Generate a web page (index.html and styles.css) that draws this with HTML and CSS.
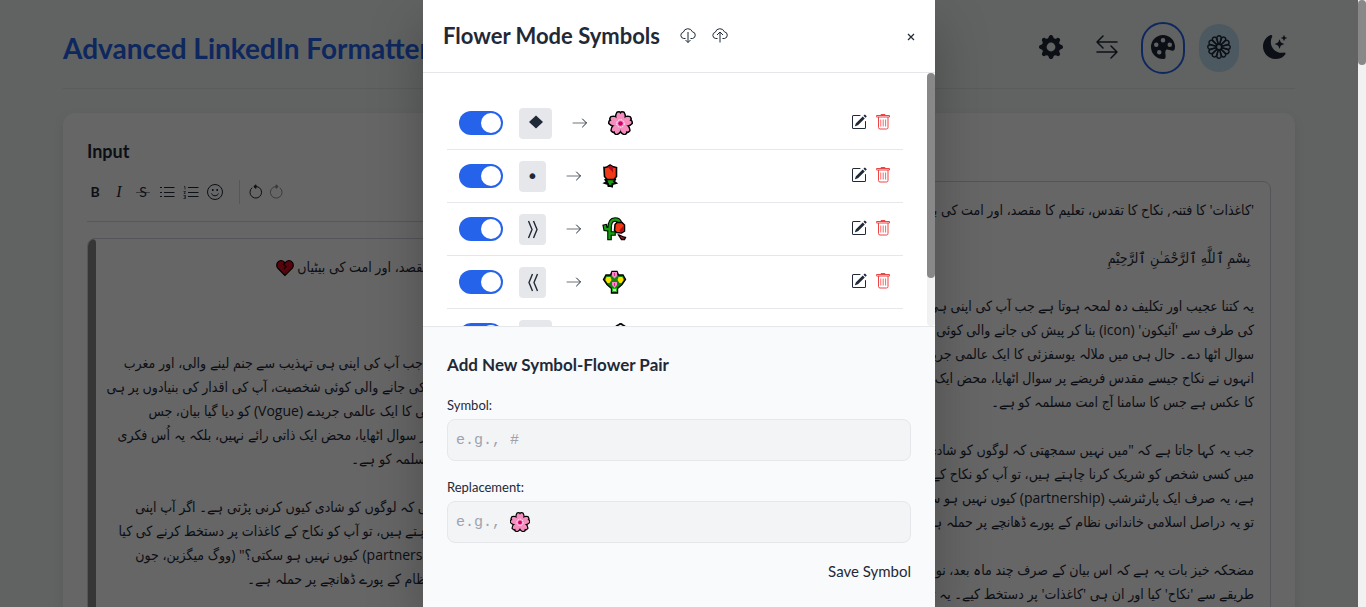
FILE: index.html
```html
<!DOCTYPE html>
<html lang="en">
<head>
<meta charset="utf-8">
<title>Advanced LinkedIn Formatter</title>
<link rel="stylesheet" href="styles.css">
</head>
<body>
<svg class="sprite" aria-hidden="true">
  <symbol id="edit" viewBox="0 0 16 16"><path d="M15.502 1.94a.5.5 0 0 1 0 .706L14.459 3.69l-2-2L13.502.646a.5.5 0 0 1 .707 0l1.293 1.293zm-1.75 2.456-2-2L4.939 9.21a.5.5 0 0 0-.121.196l-.805 2.414a.25.25 0 0 0 .316.316l2.414-.805a.5.5 0 0 0 .196-.12l6.813-6.814z"/><path d="M1 13.5A1.5 1.5 0 0 0 2.5 15h11a1.5 1.5 0 0 0 1.5-1.5v-6a.5.5 0 0 0-1 0v6a.5.5 0 0 1-.5.5h-11a.5.5 0 0 1-.5-.5v-11a.5.5 0 0 1 .5-.5H9a.5.5 0 0 0 0-1H2.5A1.5 1.5 0 0 0 1 2.5v11z"/></symbol>
  <symbol id="trash" viewBox="0 0 16 16"><g fill="none" stroke="currentColor"><path d="M1.5 2.5v-1h13v1.500h-13zM6 1.500V.5h4v1M3.500 3v10.500a1.500 1.500 0 0 0 1.500 1.500h6.500a1.500 1.500 0 0 0 1.500-1.500V3"/><path d="M5.800 5.500v7M8.200 5.500v7M10.600 5.500v7" stroke-opacity=".8"/></g></symbol>
  <symbol id="arrow" viewBox="0 0 16 16"><g fill="none" stroke="currentColor" stroke-linecap="round" stroke-linejoin="round"><path d="M1 8h13.500" stroke-opacity=".65"/><path d="m10.500 4 4 4-4 4"/></g></symbol>
  <symbol id="blossom" viewBox="0 0 24 24">
    <g fill="#f68dbf" stroke="#000" stroke-width="3" stroke-linejoin="round">
      <path id="petal" d="M12 12C7.500 8.500 7 5 9 1.800L10.800 1.600 12 3 13.200 1.600 15 1.800C17 5 16.500 8.500 12 12z"/>
      <use href="#petal" transform="rotate(72 12 12.500)"/><use href="#petal" transform="rotate(144 12 12.500)"/><use href="#petal" transform="rotate(216 12 12.500)"/><use href="#petal" transform="rotate(288 12 12.500)"/>
    </g>
    <g fill="#f68dbf" stroke="none">
      <path id="petal-fill" d="M12 12.500C7.500 8.500 7 5 9 1.800L10.800 1.600 12 3 13.200 1.600 15 1.800C17 5 16.500 8.500 12 12.500z"/><use href="#petal-fill" transform="rotate(72 12 12.500)"/><use href="#petal-fill" transform="rotate(144 12 12.500)"/><use href="#petal-fill" transform="rotate(216 12 12.500)"/><use href="#petal-fill" transform="rotate(288 12 12.500)"/>
    </g>
    <circle cx="12" cy="12.500" r="3.800" fill="#f68dbf" stroke="#fff" stroke-dasharray="1.500 1"/><circle cx="12" cy="12.500" r="2.300" fill="#d6006c"/>
  </symbol>
</svg>

<div class="app">
  <div class="page">
    <header class="top">
      <h1>Advanced LinkedIn Formatter</h1>
      <nav class="tools">
        <button aria-label="Settings"><svg viewBox="0 0 16 16"><path d="M9.405 1.05c-.413-1.4-2.397-1.4-2.81 0l-.1.34a1.464 1.464 0 0 1-2.105.872l-.31-.17c-1.283-.698-2.686.705-1.987 1.987l.169.311c.446.82.023 1.841-.872 2.105l-.34.1c-1.4.413-1.4 2.397 0 2.81l.34.1a1.464 1.464 0 0 1 .872 2.105l-.17.31c-.698 1.283.705 2.686 1.987 1.987l.311-.169a1.464 1.464 0 0 1 2.105.872l.1.34c.413 1.4 2.397 1.4 2.81 0l.1-.34a1.464 1.464 0 0 1 2.105-.872l.31.17c1.283.698 2.686-.705 1.987-1.987l-.169-.311a1.464 1.464 0 0 1 .872-2.105l.34-.1c1.4-.413 1.4-2.397 0-2.81l-.34-.1a1.464 1.464 0 0 1-.872-2.105l.17-.31c.698-1.283-.705-2.686-1.987-1.987l-.311.169a1.464 1.464 0 0 1-2.105-.872zM8 10.930a2.929 2.929 0 1 1 0-5.860 2.929 2.929 0 0 1 0 5.858z"/></svg></button>
        <button aria-label="Swap direction"><svg viewBox="0 0 24 24" fill="none" stroke="currentColor" stroke-width="1.500" stroke-linecap="round" stroke-linejoin="round"><path d="M22 7H2M8 1 2 7l6 6M2 17h20M16 11l6 6-6 6"/></svg></button>
        <button class="focused" aria-label="Theme"><svg viewBox="0 0 16 16"><path d="M12.433 10.07C14.133 10.585 16 11.15 16 8a8 8 0 1 0-8 8c1.996 0 1.826-1.504 1.649-3.08-.124-1.101-.252-2.237.351-2.920.465-.527 1.420-.237 2.433.070M8 5a1.500 1.500 0 1 1 0-3 1.500 1.500 0 0 1 0 3m4.500 3a1.500 1.500 0 1 1 0-3 1.500 1.500 0 0 1 0 3M5 6.500a1.500 1.500 0 1 1-3 0 1.500 1.500 0 0 1 3 0m.5 6.500a1.500 1.500 0 1 1 0-3 1.500 1.500 0 0 1 0 3"/></svg></button>
        <button class="active" aria-label="Flower mode"><svg viewBox="0 0 24 24" fill="none" stroke="currentColor" stroke-width="1.400"><circle cx="12" cy="12" r="2.600"/><path id="ray" d="M11.300 9.400 9.800 3a2.200 2.200 0 1 1 4.400 0l-1.500 6.400"/><use href="#ray" transform="rotate(30 12 12)"/><use href="#ray" transform="rotate(60 12 12)"/><use href="#ray" transform="rotate(90 12 12)"/><use href="#ray" transform="rotate(120 12 12)"/><use href="#ray" transform="rotate(150 12 12)"/><use href="#ray" transform="rotate(180 12 12)"/><use href="#ray" transform="rotate(210 12 12)"/><use href="#ray" transform="rotate(240 12 12)"/><use href="#ray" transform="rotate(270 12 12)"/><use href="#ray" transform="rotate(300 12 12)"/><use href="#ray" transform="rotate(330 12 12)"/></svg></button>
        <button aria-label="Dark mode"><svg viewBox="0 0 16 16"><path d="M6 .278a.77.77 0 0 1 .08.858 7.2 7.2 0 0 0-.878 3.46c0 4.021 3.278 7.277 7.318 7.277q.792-.001 1.533-.16a.79.79 0 0 1 .81.316.73.73 0 0 1-.031.893A8.35 8.35 0 0 1 8.344 16C3.734 16 0 12.286 0 7.71 0 4.266 2.114 1.312 5.124.06A.75.75 0 0 1 6 .278"/><path d="M10.794 3.148a.217.217 0 0 1 .412 0l.387 1.162c.173.518.579.924 1.097 1.097l1.162.387a.217.217 0 0 1 0 .412l-1.162.387a1.73 1.73 0 0 0-1.097 1.097l-.387 1.162a.217.217 0 0 1-.412 0l-.387-1.162A1.73 1.73 0 0 0 9.31 6.593l-1.162-.387a.217.217 0 0 1 0-.412l1.162-.387a1.73 1.73 0 0 0 1.097-1.097zM13.863.099a.145.145 0 0 1 .274 0l.258.774c.115.346.386.617.732.732l.774.258a.145.145 0 0 1 0 .274l-.774.258a1.16 1.16 0 0 0-.732.732l-.258.774a.145.145 0 0 1-.274 0l-.258-.774a1.16 1.16 0 0 0-.732-.732l-.774-.258a.145.145 0 0 1 0-.274l.774-.258c.346-.115.617-.386.732-.732z"/></svg></button>
      </nav>
    </header>

    <main class="card">
      <section class="pane">
        <h2>Input</h2>
        <div class="toolbar">
          <button class="bold" aria-label="Bold"><b>B</b></button>
          <button class="italic" aria-label="Italic"><i>I</i></button>
          <button aria-label="Strikethrough"><s>S</s></button>
          <button aria-label="Bulleted list"><svg viewBox="0 0 16 16" stroke="currentColor"><path d="M5 3.500h10.500M5 8.500h10.500M5 12.500h10.500M1 3.500h2M1 8.500h2M1 12.500h2"/></svg></button>
          <button aria-label="Numbered list"><svg viewBox="0 0 16 16" fill="none" stroke="currentColor"><path d="M5 3.500h10.500M5 8.500h10.500M5 12.500h10.500"/><path d="M1 2.500h1v3M.5 7.500h2l-1.500 2h1.500M.5 11.500h2v3H.5M1 13h1" stroke-opacity=".7"/></svg></button>
          <button aria-label="Emoji"><svg viewBox="0 0 16 16" fill="none" stroke="currentColor"><circle cx="8" cy="8" r="7.500"/><path d="M4.500 9.500c1.200 3 5.800 3 7 0"/><path d="M5.800 5v2M10.200 5v2" stroke-width="1.500"/></svg></button>
          <span class="divider"></span>
          <button class="history" aria-label="Undo"><svg viewBox="0 0 16 16" fill="none" stroke="currentColor"><path d="M4.200 3.700A5.800 5.800 0 1 0 9 2.600H6"/><path d="M8 .8 5.800 2.600 8 4.400z" fill="currentColor"/></svg></button>
          <button class="history" aria-label="Redo" disabled><svg viewBox="0 0 16 16" fill="none" stroke="currentColor"><path d="M11.800 3.700A5.800 5.800 0 1 1 7 2.600h3"/><path d="m8 .8 2.200 1.800L8 4.400z" fill="currentColor"/></svg></button>
        </div>
        <div class="editor">
          <div class="thumb"></div>
          <div class="urdu" dir="rtl" lang="ur">
            <p>'کاغذات' کا فتنہ, نکاح کا تقدس، تعلیم کا مقصد، اور امت کی بیٹیاں <svg class="emoji" viewBox="0 0 18 18"><path d="M9 16.500 1.500 9C-.5 5 2 1.500 5 1.500c2 0 3.200 1 4 2.300 1-1.300 2.200-2.300 4-2.300 3 0 5.500 3.500 3.500 7.500z" fill="#dc0a1e" stroke="#000" stroke-width="1.200"/><path d="m9 3.500-1.500 2L10 7.500 8 10" fill="none" stroke="#000" stroke-width="1.200"/></svg></p>
            <p></p>
            <p>بِسْمِ ٱللَّهِ ٱلرَّحْمَـٰنِ ٱلرَّحِيْمِ</p>
            <p></p>
            <p>یہ کتنا عجیب اور تکلیف دہ لمحہ ہوتا ہے جب آپ کی اپنی ہی تہذیب سے جنم لینے والی، اور مغرب</p>
            <p>کی طرف سے 'آئیکون' (icon) بنا کر پیش کی جانے والی کوئی شخصیت، آپ کی اقدار کی بنیادوں پر ہی</p>
            <p>سوال اٹھا دے۔ حال ہی میں ملالہ یوسفزئی کا ایک عالمی جریدے (Vogue) کو دیا گیا بیان، جس</p>
            <p>میں انہوں نے نکاح جیسے مقدس فریضے پر سوال اٹھایا، محض ایک ذاتی رائے نہیں، بلکہ یہ اُس فکری</p>
            <p>یلغار کا عکس ہے جس کا سامنا آج امت مسلمہ کو ہے۔</p>
            <p></p>
            <p>جب یہ کہا جاتا ہے کہ "میں نہیں سمجھتی کہ لوگوں کو شادی کیوں کرنی پڑتی ہے۔ اگر آپ اپنی</p>
            <p>زندگی میں کسی شخص کو شریک کرنا چاہتے ہیں، تو آپ کو نکاح کے کاغذات پر دستخط کرنے کی کیا</p>
            <p>ضرورت ہے، یہ صرف ایک پارٹنرشپ (partnership) کیوں نہیں ہو سکتی؟" (ووگ میگزین، جون</p>
            <p>۲۰۲۱)، تو پھر یہ دراصل اسلامی خاندانی نظام کے پورے ڈھانچے پر حملہ ہے۔</p>
          </div>
        </div>
      </section>
      <section class="pane">
        <h2>Output</h2>
        <div class="output">
          <div class="urdu" dir="rtl" lang="ur">
            <p>'کاغذات' کا فتنہ, نکاح کا تقدس، تعلیم کا مقصد، اور امت کی بیٹیاں</p>
            <p></p>
            <p>&nbsp;بِسْمِ ٱللَّهِ ٱلرَّحْمَـٰنِ ٱلرَّحِيْمِ</p>
            <p></p>
            <p>یہ کتنا عجیب اور تکلیف دہ لمحہ ہوتا ہے جب آپ کی اپنی ہی تہذیب سے جنم</p>
            <p>کی طرف سے 'آئیکون' (icon) بنا کر پیش کی جانے والی کوئی شخصیت، آپ کی</p>
            <p>سوال اٹھا دے۔ حال ہی میں ملالہ یوسفزئی کا ایک عالمی جریدے (Vogue) کو</p>
            <p>انہوں نے نکاح جیسے مقدس فریضے پر سوال اٹھایا، محض ایک ذاتی رائے نہیں،</p>
            <p>کا عکس ہے جس کا سامنا آج امت مسلمہ کو ہے۔</p>
            <p></p>
            <p>جب یہ کہا جاتا ہے کہ "میں نہیں سمجھتی کہ لوگوں کو شادی کیوں کرنی پڑتی</p>
            <p>میں کسی شخص کو شریک کرنا چاہتے ہیں، تو آپ کو نکاح کے کاغذات پر دستخط</p>
            <p>ہے، یہ صرف ایک پارٹنرشپ (partnership) کیوں نہیں ہو سکتی؟" (ووگ</p>
            <p>تو یہ دراصل اسلامی خاندانی نظام کے پورے ڈھانچے پر حملہ ہے۔</p>
            <p></p>
            <p>مضحکہ خیز بات یہ ہے کہ اس بیان کے صرف چند ماہ بعد، نومبر میں</p>
            <p>طریقے سے 'نکاح' کیا اور ان ہی 'کاغذات' پر دستخط کیے۔ یہ تضاد</p>
          </div>
        </div>
      </section>
    </main>
  </div>

  <div class="overlay">
    <div class="modal" role="dialog" aria-labelledby="modal-title">
      <header class="modal-head">
        <h2 id="modal-title">Flower Mode Symbols</h2>
        <button aria-label="Download"><svg viewBox="0 0 16 16" fill="none" stroke="currentColor"><path d="M5.500 11.500H3.800A3.200 3.200 0 0 1 3.300 5.200 4.800 4.800 0 0 1 12.400 4.800 3.400 3.400 0 0 1 12.500 11.500H10.500"/><path d="M8 5v10.500M5.500 13 8 15.500l2.500-2.500"/></svg></button>
        <button aria-label="Upload"><svg viewBox="0 0 16 16" fill="none" stroke="currentColor"><path d="M5.500 11.500H3.800A3.200 3.200 0 0 1 3.300 5.200 4.800 4.800 0 0 1 12.400 4.800 3.400 3.400 0 0 1 12.500 11.500H10.500"/><path d="M8 15.500V5M5 8l3-3 3 3"/></svg></button>
        <button class="close" aria-label="Close"><svg viewBox="0 0 8 8" fill="none" stroke="currentColor" stroke-width="1.200"><path d="m1 1 6 6M7 1 1 7"/></svg></button>
      </header>

      <div class="list-wrap">
        <ul class="list">
          <li>
            <input type="checkbox" class="switch" aria-label="Enable diamond" checked><kbd><svg viewBox="0 0 14 20"><path d="m7 2.500 7 6.500-7 6.500L0 9z"/></svg></kbd><svg class="arrow"><use href="#arrow"/></svg>
            <svg class="flower"><use href="#blossom"/></svg>
            <span class="actions"><button aria-label="Edit"><svg><use href="#edit"/></svg></button><button class="delete" aria-label="Delete"><svg><use href="#trash"/></svg></button></span>
          </li>
          <li>
            <input type="checkbox" class="switch" aria-label="Enable bullet" checked><kbd class="narrow">•</kbd><svg class="arrow"><use href="#arrow"/></svg>
            <svg class="flower slim" viewBox="0 0 16 24"><path d="m8 14-5 2 1.500 2-2 1L5.500 20l.5 2h2l1.500.5L10 20l3.500-1-2-1.500 1-2z" fill="#13a10e" stroke="#000" stroke-width="2"/><path d="M1.500 3.500C4 4 5 3 7.500 1L10 2.500l4 1v9L11.500 15.500H4.500l-2.500-3z" fill="#f03a17" stroke="#000" stroke-width="1.600"/><path d="m5 3 3-1.500L10.500 3v6C9 6 7 5 5 3z" fill="#b10e1c"/></svg>
            <span class="actions"><button aria-label="Edit"><svg><use href="#edit"/></svg></button><button class="delete" aria-label="Delete"><svg><use href="#trash"/></svg></button></span>
          </li>
          <li>
            <input type="checkbox" class="switch" aria-label="Enable right brackets" checked><kbd class="narrow"><svg viewBox="0 0 12 20" fill="none" stroke="currentColor" stroke-width="1.400"><path d="m1.500 2 3.500 8.500L1.500 19M6.500 2l3.500 8.500L6.500 19"/></svg></kbd><svg class="arrow"><use href="#arrow"/></svg>
            <svg class="flower" viewBox="0 0 24 24"><g fill="none" stroke-linecap="square"><path d="M7 21V12C7 4 10 2.500 12.500 2.500S17 4 17.500 6M2.500 9.500 3 12l4 .5M7 16.500h4" stroke="#000" stroke-width="4.600"/><path d="M7 21V12C7 4 10 2.500 12.500 2.500S17 4 17.500 6M2.500 9.500 3 12l4 .5M7 16.500h4" stroke="#13a10e" stroke-width="2.400"/></g><path d="M12.500 7.500 14.500 5.500h5l2.500 2.500v6l-3 2-5-.5-2-2z" fill="#f03a17" stroke="#000" stroke-width="1.500"/><path d="m17 13 4-4v4l-3 3z" fill="#b10e1c"/><path d="M16 18c2 0 2.500 1.500 7 2.500l-1 2h-3z" fill="#c50f1f" stroke="#000" stroke-width="1.300"/></svg>
            <span class="actions"><button aria-label="Edit"><svg><use href="#edit"/></svg></button><button class="delete" aria-label="Delete"><svg><use href="#trash"/></svg></button></span>
          </li>
          <li>
            <input type="checkbox" class="switch" aria-label="Enable left brackets" checked><kbd class="narrow"><svg viewBox="0 0 12 20" fill="none" stroke="currentColor" stroke-width="1.400"><path d="m5.500 2-3.500 8.500L5.500 19M10.500 2 7 10.500l3.500 8.500"/></svg></kbd><svg class="arrow"><use href="#arrow"/></svg>
            <svg class="flower" viewBox="0 0 24 24"><path d="M1 9.500 3.500 5H8l1.500-3.500h5L16 5h4.500L23 9.500l-3.500 5-4.500 4v4.500H9v-4.500l-4.500-4z" fill="#13850e" stroke="#000" stroke-width="1.400"/><path d="M9.500 22h5v-4h-5z" fill="#16c60c"/><path d="M4 7h4l1 3-2 3H5l-2-3zM16 7h4l1 3-2 3h-2l-2-3z" fill="#fce100"/><path d="M9.500 2h5v4L12 8.500 9.500 6zM9.500 12h5v3L12 18l-2.500-3z" fill="#f58dc4"/><path d="M12 3v3M12 13v3" stroke="#e3008c" stroke-width=".8"/><path d="M10.500 20h3" stroke="#c8f5c0" stroke-width="2"/></svg>
            <span class="actions"><button aria-label="Edit"><svg><use href="#edit"/></svg></button><button class="delete" aria-label="Delete"><svg><use href="#trash"/></svg></button></span>
          </li>
          <li>
            <input type="checkbox" class="switch" aria-label="Enable square" checked><kbd></kbd><svg class="arrow"><use href="#arrow"/></svg>
            <svg class="flower" viewBox="0 0 24 24"><path d="M6 4c2 0 2-2 4-2 1.500-1.500 3-1.500 4 0 2 0 2 2 4 2l4 2-2 12-7 3-8-3-2-9z" fill="#f2f2f2" stroke="#000" stroke-width="1.600"/></svg>
            <span class="actions"><button aria-label="Edit"><svg><use href="#edit"/></svg></button><button class="delete" aria-label="Delete"><svg><use href="#trash"/></svg></button></span>
          </li>
        </ul>
        <div class="track"><div class="list-thumb"></div></div>
      </div>

      <form class="add">
        <h3>Add New Symbol-Flower Pair</h3>
        <label for="symbol">Symbol:</label>
        <div class="field"><input id="symbol" type="text" placeholder="e.g., #"></div>
        <label for="replacement">Replacement:</label>
        <div class="field"><input id="replacement" type="text" placeholder="e.g.,"><svg class="hint"><use href="#blossom"/></svg></div>
        <button type="button">Save Symbol</button>
      </form>
    </div>
  </div>
</div>
<div class="page-track"><div class="page-thumb"></div></div>
</body>
</html>
```
FILE: styles.css
```css
* { box-sizing: border-box; }
body {
  margin: 0;
  display: flex;
  height: 100vh;
  overflow: hidden;
  font-family: Lato, "Open Sans", sans-serif;
  font-size: 15px;
  line-height: 24px;
  color: #1f2937;
}
h1, h2, h3, p, ul { margin: 0; padding: 0; }
button {
  display: flex;
  align-items: center;
  justify-content: center;
  padding: 0;
  border: 0;
  background: none;
  font: inherit;
  color: inherit;
}
svg { display: block; fill: currentColor; flex: none; }
svg[fill="none"] { fill: none; }
.sprite { position: absolute; width: 0; height: 0; }

.app { position: relative; flex: 1; min-width: 0; overflow: hidden; background: #f0f7f3; }
.page { max-width: 1280px; margin: 0 auto; padding: 24px; }
.top {
  display: flex;
  align-items: center;
  justify-content: space-between;
  padding-bottom: 16px;
  border-bottom: 1px solid #e2e6e6;
  margin-bottom: 24px;
}
.top h1 { font-size: 28px; line-height: 36px; color: #2563eb; }
.tools { display: flex; gap: 16px; }
.tools button { width: 40px; height: 48px; padding-bottom: 2px; border-radius: 20px; }
.tools svg { width: 24px; height: 24px; }
.tools .focused { outline: 2px solid #2563eb; }
.tools .active { background: #bfdff0; }

.card {
  display: grid;
  grid-template-columns: 1fr 1fr;
  gap: 24px;
  padding: 24px;
  border-radius: 12px;
  background: #fff;
  box-shadow: 0 4px 12px rgba(0, 0, 0, .08);
}
.pane { min-width: 0; }
.pane h2 { font-size: 18px; line-height: 28px; margin-bottom: 16px; }
.toolbar {
  display: flex;
  align-items: center;
  height: 41px;
  padding: 0 0 18px;
  border-bottom: 1px solid #d6d9dd;
  margin-bottom: 16px;
}
.toolbar button { width: 24px; height: 24px; font-size: 14px; }
.toolbar button:first-child { width: 16px; margin-right: 4px; }
.toolbar svg { width: 16px; height: 16px; }
.toolbar i { font-family: "Liberation Serif", serif; font-size: 16px; }
.toolbar s {
  padding: 0 3px;
  text-decoration: none;
  background: linear-gradient(#8b919a, #8b919a) center / 100% 1px no-repeat;
}
.toolbar .history { width: 20px; }
.toolbar button:disabled { opacity: .5; }
.divider { width: 1px; height: 24px; margin: 0 6px 0 12px; background: #d6d9dd; }
.editor, .output { border: 1px solid #d1d5db; border-radius: 8px; overflow: hidden; height: 640px; }
.editor { display: flex; }
.thumb { width: 8px; border-radius: 4px; background: #888; }
.urdu {
  flex: 1;
  min-width: 0;
  padding: 16px;
  font-family: "Open Sans", "DejaVu Sans Condensed", "DejaVu Sans", sans-serif;
  font-size: 14px;
  line-height: 24px;
}
.editor .urdu { padding-right: 24px; }
.urdu p { height: 24px; white-space: nowrap; }
.emoji { display: inline-block; width: 18px; height: 18px; vertical-align: middle; }

.overlay {
  position: absolute;
  inset: 0;
  display: flex;
  justify-content: center;
  background: rgba(0, 0, 0, .6);
}
.modal {
  display: flex;
  flex-direction: column;
  width: 512px;
  background: #fff;
  box-shadow: 0 25px 50px rgba(0, 0, 0, .25);
}
.modal-head {
  display: flex;
  align-items: center;
  height: 73px;
  padding: 0 20px;
  border-bottom: 1px solid #e5e7eb;
}
.modal-head h2 { font-size: 22px; line-height: 32px; margin-right: 20px; }
.modal-head button { width: 16px; margin-right: 16px; padding-bottom: 2px; }
.modal-head svg { width: 16px; height: 16px; }
.modal-head .close { width: 8px; margin: 0 0 0 auto; padding: 2px 0 0; }
.modal-head .close svg { width: 8px; height: 8px; }

.list-wrap { display: flex; flex: 1; min-height: 0; overflow: hidden; }
.list { flex: 1; height: max-content; padding: 24px; list-style: none; }
.list li {
  display: flex;
  align-items: center;
  gap: 16px;
  height: 53px;
  padding: 0 8px 0 12px;
  border-bottom: 1px solid #e5e7eb;
}
.switch {
  appearance: none;
  display: flex;
  width: 44px;
  height: 24px;
  margin: 0;
  padding: 2px;
  border-radius: 12px;
  background: #2563eb;
  justify-content: flex-end;
}
.switch::before { content: ""; width: 20px; height: 20px; border-radius: 50%; background: #fff; }
kbd {
  display: flex;
  align-items: center;
  justify-content: center;
  width: 33px;
  height: 31px;
  border-radius: 4px;
  background: #e5e7eb;
  font: 20px/31px "DejaVu Sans", sans-serif;
}
kbd.narrow { width: 27px; }
kbd svg { width: 14px; height: 20px; }
.arrow { width: 24px; height: 16px; }
.flower { width: 25px; height: 24px; }
.flower.slim { width: 17px; }
.actions { display: flex; margin-left: auto; padding-bottom: 2px; }
.actions button { width: 24px; height: 24px; }
.actions svg { width: 16px; height: 16px; }
.delete { color: #ef4444; }
.track { width: 8px; border-radius: 4px; background: #f1f1f1; }
.list-thumb { height: 81%; border-radius: 4px; background: #888; }

.add {
  display: flex;
  flex-direction: column;
  padding: 24px;
  border-top: 1px solid #e5e7eb;
  background: #f9fafc;
}
.add h3 { font-size: 17px; line-height: 28px; margin-bottom: 16px; }
.add label { font-size: 13px; line-height: 20px; margin-bottom: 4px; }
.field { position: relative; margin-bottom: 16px; }
.field input {
  display: block;
  width: 100%;
  height: 42px;
  padding: 0 8px;
  border: 1px solid #e5e7eb;
  border-radius: 8px;
  background: #f3f4f6;
  font: 15px/24px "Liberation Mono", monospace;
}
.field input::placeholder { color: #9ca3af; opacity: 1; }
.hint { position: absolute; left: 63px; top: 11px; width: 20px; height: 20px; }
.add button { align-self: flex-end; }

.page-track { width: 8px; background: #f1f1f1; }
.page-thumb { height: 65px; border-radius: 4px; background: #888; }
```
